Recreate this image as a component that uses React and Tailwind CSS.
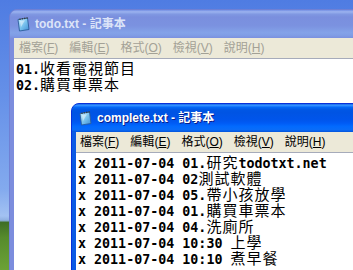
import React from "react";

const CJK = /([\u2e80-\u9fff\uf900-\ufaff\uff00-\uffef]+)/;

const MENU = [
  ["檔案", "F"],
  ["編輯", "E"],
  ["格式", "O"],
  ["檢視", "V"],
  ["說明", "H"],
];

function NotepadIcon() {
  return (
    <svg width="14" height="16" viewBox="0 0 14 16" className="shrink-0">
      <defs>
        <linearGradient id="pad" x1="0" y1="0" x2="1" y2="1">
          <stop offset="0" stopColor="#C8ECFC" />
          <stop offset="0.5" stopColor="#7CC4EE" />
          <stop offset="1" stopColor="#3E8ED4" />
        </linearGradient>
      </defs>
      <polygon points="2,3.5 11.5,2 13,13.5 3.5,15" fill="url(#pad)" stroke="#2B5D9C" strokeWidth="0.9" />
      <polygon points="4,5 9,4.2 5,11" fill="#FFFFFF" opacity="0.45" />
      <circle cx="4" cy="3.2" r="0.8" fill="#3A3A3A" />
      <circle cx="6.4" cy="2.8" r="0.8" fill="#3A3A3A" />
      <circle cx="8.8" cy="2.4" r="0.8" fill="#3A3A3A" />
      <circle cx="11.1" cy="2" r="0.8" fill="#3A3A3A" />
    </svg>
  );
}

function Line({ text }) {
  const parts = text.split(CJK);
  return (
    <div className="h-[16px] leading-[16px] whitespace-pre">
      {parts.map((p, i) =>
        i % 2 === 1 ? (
          <span
            key={i}
            className="font-['Noto_Sans_CJK_TC',sans-serif] text-[15px] leading-[15px] tracking-[1px] font-normal"
          >
            {p}
          </span>
        ) : (
          <span key={i}>{p}</span>
        )
      )}
    </div>
  );
}

function Menu({ active }) {
  return (
    <div
      className={`h-[20px] shrink-0 flex items-center bg-[#ECE9D8] font-['Liberation_Sans','Noto_Sans_CJK_TC',sans-serif] text-[12px] leading-none ${
        active ? "pl-[4px] text-black" : "pl-[5px] text-[#A3A196]"
      }`}
    >
      {MENU.map(([t, k]) => (
        <span key={k} className="mr-[11px] whitespace-nowrap">
          {t}(<span className="underline">{k}</span>)
        </span>
      ))}
    </div>
  );
}

function Window({ active, title, lines, className }) {
  return (
    <div
      className={`absolute flex flex-col rounded-t-[8px] overflow-hidden border ${
        active ? "border-[#0831D9] bg-[#0B5AE4]" : "border-[#6F80D4] bg-[#7C8DDD]"
      } ${className}`}
    >
      <div
        className={`h-[28px] shrink-0 flex items-center pl-[6px] gap-[5px] ${
          active
            ? "bg-[linear-gradient(180deg,#0A5FE8_0%,#3D95FF_4%,#1B7FFF_8%,#0367F5_12%,#0057E5_20%,#0054E3_30%,#0055EB_56%,#005BF5_68%,#026AFE_80%,#0A6CF8_92%,#0454DA_100%)]"
            : "bg-[linear-gradient(180deg,#7490E4_0%,#9AB0EE_6%,#93ABEB_9%,#8098E2_15%,#7A8FDE_25%,#7B92E0_56%,#83A2E8_81%,#809DE6_90%,#7A90DF_100%)]"
        }`}
      >
        <NotepadIcon />
        <span
          className={`font-['Liberation_Sans','Noto_Sans_CJK_TC',sans-serif] font-bold text-[12px] whitespace-nowrap ${
            active ? "text-white [text-shadow:1px_1px_#0A1E8C]" : "text-[#DCE4F8]"
          }`}
        >
          {title}
        </span>
      </div>
      <div className="flex-1 flex flex-col px-[4px]">
        <Menu active={active} />
        <div className="h-px shrink-0 bg-[#A6ABBA]" />
        <div className="flex-1 bg-white pl-[2px] pt-[1px] font-['DejaVu_Sans_Mono',monospace] font-bold text-[13.33px] text-black">
          {lines.map((l) => (
            <Line key={l} text={l} />
          ))}
        </div>
      </div>
    </div>
  );
}

export default function App() {
  return (
    <div className="relative w-[353px] h-[270px] overflow-hidden bg-[linear-gradient(180deg,#4F7CE2_0%,#6590E8_35%,#83AAEE_70%,#A3C2F2_80%,#8FB0E0_81.6%,#3F6E26_82.4%,#568B2C_88%,#6CA236_100%)]">
      <Window
        className="left-[9px] top-[9px] w-[380px] h-[300px]"
        title="todo.txt - 記事本"
        lines={["01.收看電視節目", "02.購買車票本"]}
      />
      <Window
        active
        className="left-[71px] top-[103px] w-[310px] h-[200px]"
        title="complete.txt - 記事本"
        lines={[
          "x 2011-07-04 01.研究todotxt.net",
          "x 2011-07-04 02測試軟體",
          "x 2011-07-04 05.帶小孩放學",
          "x 2011-07-04 01.購買車票本",
          "x 2011-07-04 04.洗廁所",
          "x 2011-07-04 10:30 上學",
          "x 2011-07-04 10:10 煮早餐",
        ]}
      />
    </div>
  );
}
